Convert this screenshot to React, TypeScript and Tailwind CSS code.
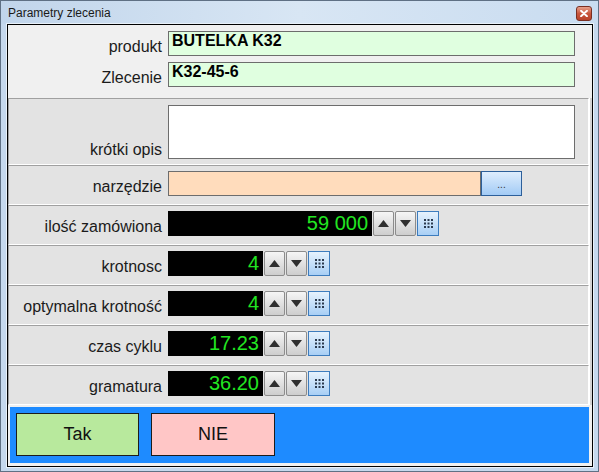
import React from "react";

const font = "font-['Liberation_Sans',Arial,sans-serif]";

function UpBtn() {
  return (
    <div className="ml-[1px] w-[21px] h-[25px] border border-[#8c8c8c] rounded-[2px] bg-gradient-to-b from-[#f6f6f6] to-[#cdcdcd] flex items-center justify-center">
      <svg width="11" height="7" viewBox="0 0 11 7">
        <polygon points="0,7 5.5,0 11,7" fill="#2f2f2f" />
      </svg>
    </div>
  );
}

function DownBtn() {
  return (
    <div className="ml-[1px] w-[21px] h-[25px] border border-[#8c8c8c] rounded-[2px] bg-gradient-to-b from-[#f6f6f6] to-[#cdcdcd] flex items-center justify-center">
      <svg width="11" height="7" viewBox="0 0 11 7">
        <polygon points="0,0 11,0 5.5,7" fill="#2f2f2f" />
      </svg>
    </div>
  );
}

function GridBtn() {
  const dots: React.ReactElement[] = [];
  for (let r = 0; r < 3; r++)
    for (let c = 0; c < 3; c++)
      dots.push(<rect key={`${r}-${c}`} x={c * 3.5} y={r * 3.5} width="2" height="2" fill="#2b3a4e" />);
  return (
    <div className="ml-[1px] w-[22px] h-[25px] border border-[#3d7cbd] bg-gradient-to-b from-[#e6f2fd] to-[#a8cff5] flex items-center justify-center">
      <svg width="9" height="9" viewBox="0 0 9 9">
        {dots}
      </svg>
    </div>
  );
}

function Panel({ children, h }: { children: React.ReactNode; h: string }) {
  return (
    <div className={`${h} border-t border-l border-t-[#a0a0a0] border-l-[#a0a0a0] border-b border-r border-b-white border-r-white bg-[#e3e3e3]`}>
      {children}
    </div>
  );
}

function SpinRow({ label, value, wide }: { label: string; value: string; wide?: boolean }) {
  return (
    <Panel h="h-[40px] pt-[5px]">
      <div className="flex items-end">
        <div className="w-[153px] text-right text-[16px] leading-[18px] text-[#1b1b1b]">{label}</div>
        <div className="ml-[6px] flex">
          <div
            className={`${wide ? "w-[204px]" : "w-[95px]"} h-[25px] bg-black text-right pr-[4px] text-[20px] leading-[25px] text-[#22e622]`}
          >
            {value}
          </div>
          <UpBtn />
          <DownBtn />
          <GridBtn />
        </div>
      </div>
    </Panel>
  );
}

export default function App() {
  return (
    <div className={`${font} w-[599px] h-[472px] flex flex-col border border-[#5f7084] bg-[#c5d8ed] overflow-hidden`}>
      {/* Title bar */}
      <div className="h-[23px] shrink-0 flex items-start bg-gradient-to-r from-[#c1d5eb] via-[#d8e6f4] to-[#c9dcf0]">
        <span className="ml-[7px] mt-[5px] text-[12px] leading-[14px] text-[#1a1a1a]">Parametry zlecenia</span>
        <div className="ml-auto mr-[6px] mt-[5px] w-[16px] h-[15px] rounded-[3px] border border-[#7a2f22] bg-gradient-to-b from-[#e6a08c] via-[#c9573d] to-[#b8422a] flex items-center justify-center">
          <svg width="8" height="7" viewBox="0 0 8 7">
            <path d="M1 0.8 L7 6.2 M7 0.8 L1 6.2" stroke="#ffffff" strokeWidth="1.9" strokeLinecap="round" />
          </svg>
        </div>
      </div>

      {/* Client */}
      <div className="ml-[6px] mr-[5px] mb-[4px] flex-1 border border-black bg-[#f0f0f0] flex flex-col shadow-[0_0_0_1px_#e9f1f9]">
        {/* Top section */}
        <div className="h-[73px] shrink-0 pt-[6px] flex flex-col gap-[6px]">
          <div className="flex items-end">
            <div className="w-[154px] text-right text-[16px] leading-[18px] text-[#1b1b1b]">produkt</div>
            <div className="ml-[6px] w-[407px] h-[25px] border border-[#6d6d6d] bg-[#e0ffe0] pl-[3px] font-bold text-[16px] leading-[18px] text-black">
              BUTELKA K32
            </div>
          </div>
          <div className="flex items-end">
            <div className="w-[154px] text-right text-[16px] leading-[18px] text-[#1b1b1b]">Zlecenie</div>
            <div className="ml-[6px] w-[407px] h-[25px] border border-[#6d6d6d] bg-[#e0ffe0] pl-[3px] font-bold text-[16px] leading-[18px] text-black">
              K32-45-6
            </div>
          </div>
        </div>

        {/* Panels */}
        <div className="flex shrink-0">
          <div className="w-[581px] flex flex-col">
            <Panel h="h-[67px] pt-[6px]">
              <div className="flex items-end">
                <div className="w-[153px] text-right text-[16px] leading-[18px] text-[#1b1b1b]">krótki opis</div>
                <div className="ml-[6px] w-[407px] h-[54px] border border-[#6d6d6d] bg-white" />
              </div>
            </Panel>
            <Panel h="h-[40px] pt-[5px]">
              <div className="flex items-end">
                <div className="w-[153px] text-right text-[16px] leading-[18px] text-[#1b1b1b]">narzędzie</div>
                <div className="ml-[6px] w-[313px] h-[25px] border border-[#6d6d6d] bg-[#ffdcbc]" />
                <div className="w-[41px] h-[25px] border border-[#2c5f9a] bg-gradient-to-b from-[#deedfd] to-[#a2cbf5] flex items-end justify-center pb-[6px] text-[10px] leading-[8px] text-[#333]">
                  ...
                </div>
              </div>
            </Panel>
            <SpinRow label="ilość zamówiona" value="59 000" wide />
            <SpinRow label="krotnosc" value="4" />
            <SpinRow label="optymalna krotność" value="4" />
            <SpinRow label="czas cyklu" value="17.23" />
            <SpinRow label="gramatura" value="36.20" />
          </div>
          <div className="flex-1 bg-[#d4d4d4] border-l border-l-white" />
        </div>

        {/* Footer */}
        <div className="mt-[2px] ml-[2px] mr-[3px] h-[56px] shrink-0 bg-[#1e8bff] pl-[6px] pt-[6px] flex gap-[12px]">
          <div className="w-[123px] h-[43px] border border-[#1c1c1c] bg-[#b8e99d] flex items-center justify-center text-[18px] text-[#111]">
            Tak
          </div>
          <div className="w-[124px] h-[43px] border border-[#1c1c1c] bg-[#ffc6c6] flex items-center justify-center text-[18px] text-[#111]">
            NIE
          </div>
        </div>
      </div>
    </div>
  );
}
